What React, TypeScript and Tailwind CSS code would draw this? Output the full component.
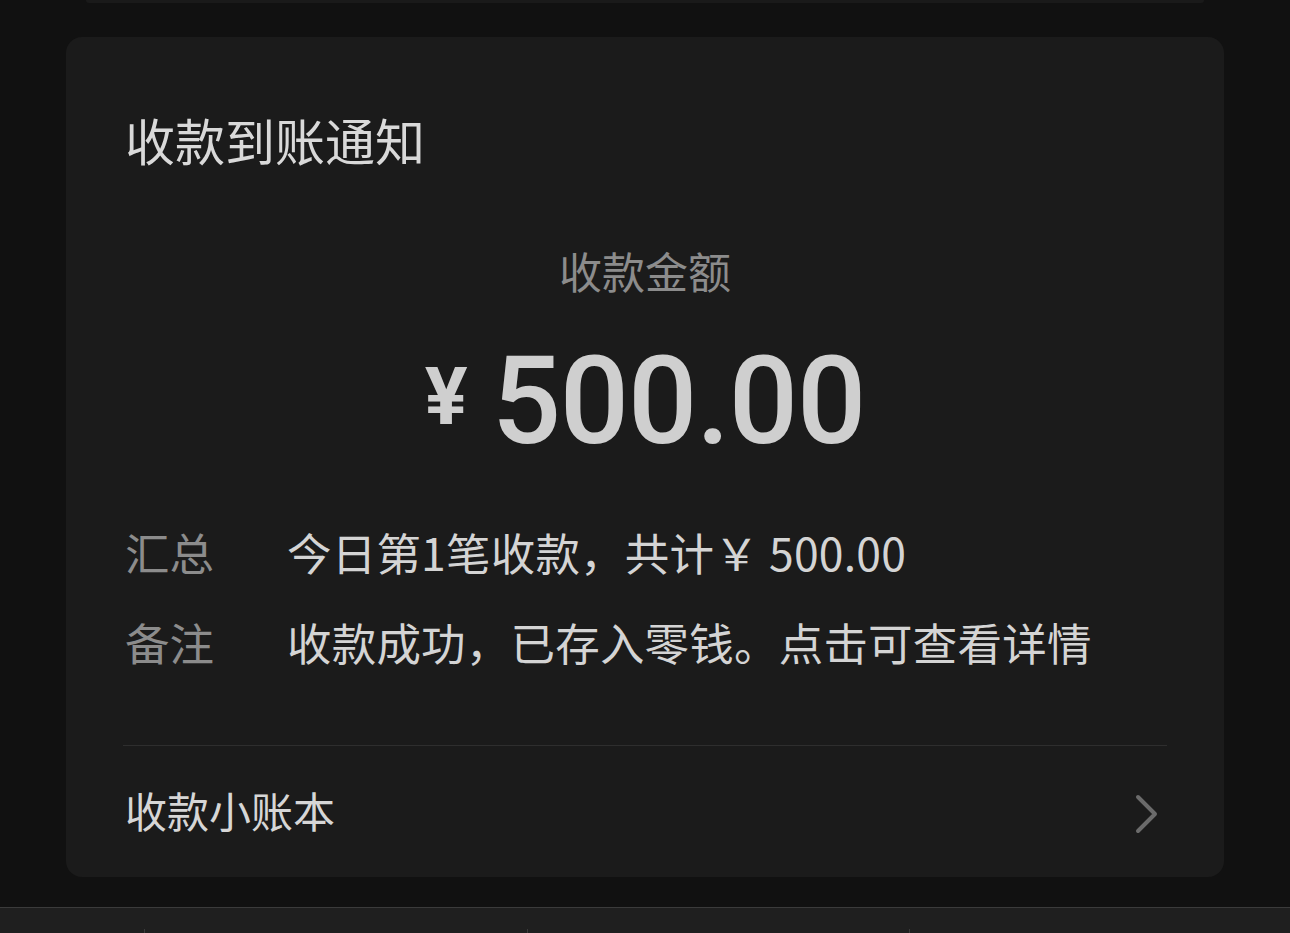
const cjk = { fontFamily: '"Noto Sans CJK SC", "Noto Sans", sans-serif' };
const num = { fontFamily: 'Roboto, "Noto Sans", sans-serif' };

const rows = [
  { label: "汇总", value: "今日第1笔收款，共计￥ 500.00" },
  { label: "备注", value: "收款成功，已存入零钱。点击可查看详情" },
];

function Chevron() {
  return (
    <svg width="26" height="40" viewBox="0 0 26 40" fill="none" className="mr-[5px] mt-[8px]">
      <polyline
        points="4,3 21,20 4,37"
        stroke="#6b6b6b"
        strokeWidth="4"
        strokeLinecap="round"
        strokeLinejoin="round"
      />
    </svg>
  );
}

export default function App() {
  return (
    <div className="h-[933px] w-[1290px] overflow-hidden bg-[#111111] flex flex-col" style={cjk}>
      {/* tail of the previous message card */}
      <div className="mx-[86px] h-[3px] rounded-b-[4px] bg-[#1a1a1a]" />

      <div className="mx-[66px] mt-[34px] rounded-[16px] bg-[#1b1b1b] px-[59px] pt-[77px] pb-[43px]">
        <h1 className="text-[50px] leading-[50px] font-normal text-[#d9d9d9]">收款到账通知</h1>

        <div className="mt-[85px] text-center text-[43px] leading-[43px] text-[#8c8c8c]">收款金额</div>

        <div className="mt-[49px] flex items-start justify-center text-[#cfcfcf]" style={num}>
          <span className="mt-[16px] mr-[24px] text-[80px] leading-[80px] font-bold">¥</span>
          <span className="text-[122px] leading-[122px] font-medium tracking-[-1.2px]">500.00</span>
        </div>

        <div className="mt-[67px] flex flex-col gap-[45px]">
          {rows.map((r) => (
            <div key={r.label} className="grid grid-cols-[162px_1fr] text-[44.5px] leading-[44.5px]">
              <span className="text-[#8c8c8c]">{r.label}</span>
              <span className="text-[#d4d4d4] tracking-[0.2px]">{r.value}</span>
            </div>
          ))}
        </div>

        <div className="mt-[81px] h-px -mx-[2px] bg-[#2e2e2e]" />

        <div className="mt-[40px] flex items-center justify-between">
          <span className="text-[42px] leading-[42px] text-[#d6d6d6]">收款小账本</span>
          <Chevron />
        </div>
      </div>

      <div className="flex-1" />

      {/* bottom toolbar edge */}
      <div className="h-[26px] border-t border-[#3b3b3b] bg-[#1f1f1f] flex items-end">
        <div className="ml-[144px] h-[4px] w-px bg-[#3a3a3a]" />
        <div className="ml-[382px] h-[4px] w-px bg-[#3a3a3a]" />
        <div className="ml-[381px] h-[4px] w-px bg-[#3a3a3a]" />
      </div>
    </div>
  );
}
